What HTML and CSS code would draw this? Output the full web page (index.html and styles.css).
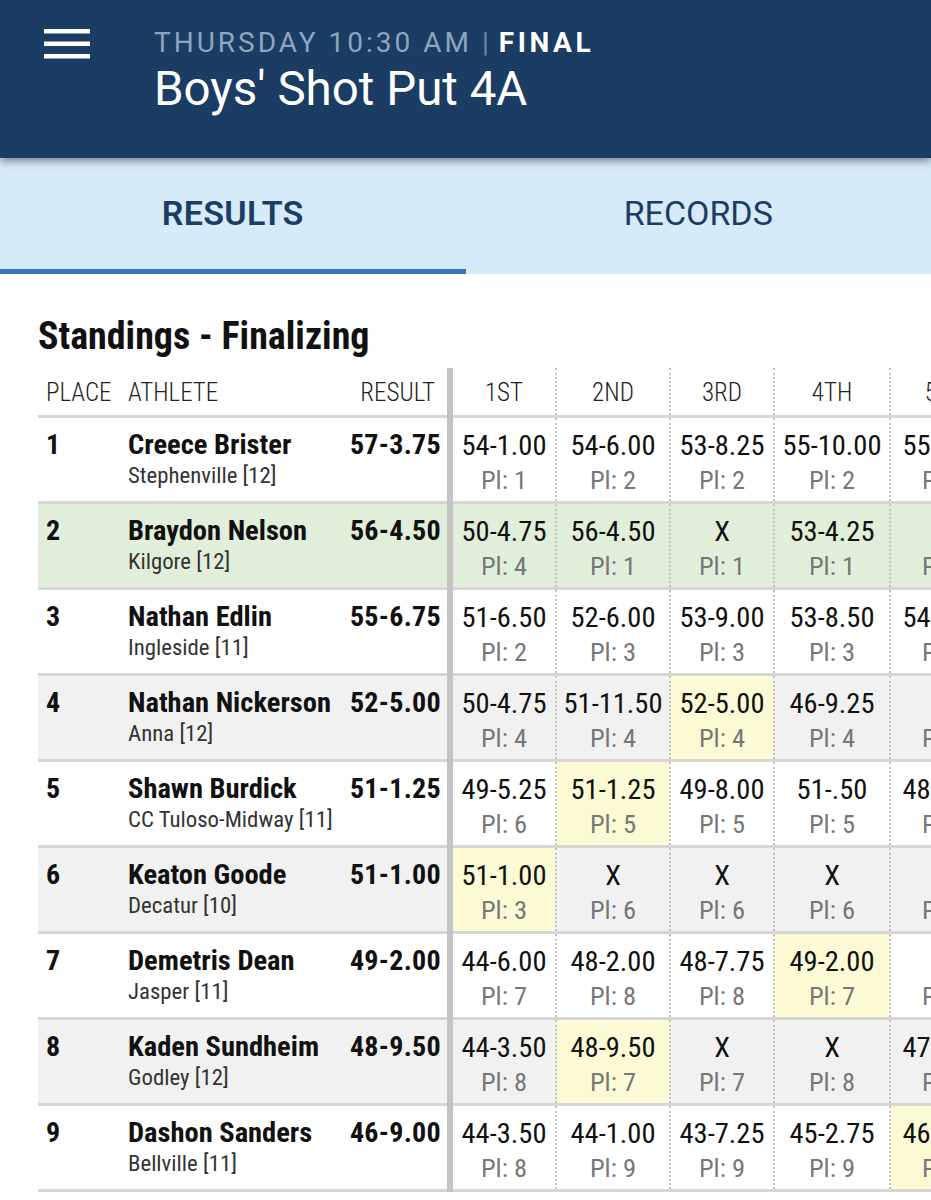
FILE: index.html
```html
<!DOCTYPE html>
<html lang="en">
<head>
<meta charset="utf-8">
<title>Boys' Shot Put 4A</title>
<link rel="stylesheet" href="styles.css">
</head>
<body>
<header class="appbar">
  <button class="menu" aria-label="Menu">
    <svg width="46" height="30" viewBox="0 0 46 30"><rect x="0" y="0" width="46" height="4.5" fill="#fff"/><rect x="0" y="12.5" width="46" height="4.5" fill="#fff"/><rect x="0" y="25" width="46" height="4.5" fill="#fff"/></svg>
  </button>
  <div class="titles">
    <div class="meta">THURSDAY 10:30 AM <span class="sep">|</span> <b>FINAL</b></div>
    <h1 class="title">Boys' Shot Put 4A</h1>
  </div>
</header>
<nav class="tabs">
  <div class="tab active">RESULTS</div>
  <div class="tab">RECORDS</div>
</nav>
<main class="content">
  <h2 class="heading">Standings - Finalizing</h2>
  <div class="tablewrap">
    <table class="standings">
      <colgroup>
        <col class="c-place"><col class="c-athlete"><col class="c-result">
        <col class="c-a1"><col class="c-a2"><col class="c-a3"><col class="c-a4"><col class="c-a5"><col class="c-a6">
      </colgroup>
      <thead>
        <tr>
          <th class="place">PLACE</th><th class="athlete">ATHLETE</th><th class="result">RESULT</th>
          <th class="att">1ST</th><th class="att">2ND</th><th class="att">3RD</th><th class="att">4TH</th><th class="att">5TH</th><th class="att">6TH</th>
        </tr>
      </thead>
      <tbody>
        <tr>
          <td class="place">1</td><td class="athlete"><div class="name">Creece Brister</div><div class="school">Stephenville [12]</div></td><td class="result">57-3.75</td>
          <td class="att"><div class="mark">54-1.00</div><div class="pl">Pl: 1</div></td>
          <td class="att"><div class="mark">54-6.00</div><div class="pl">Pl: 2</div></td>
          <td class="att"><div class="mark">53-8.25</div><div class="pl">Pl: 2</div></td>
          <td class="att"><div class="mark">55-10.00</div><div class="pl">Pl: 2</div></td>
          <td class="att"><div class="mark">55-2.50</div><div class="pl">Pl: 2</div></td>
          <td class="att best"><div class="mark">57-3.75</div><div class="pl">Pl: 1</div></td>
        </tr>
        <tr class="mine">
          <td class="place">2</td><td class="athlete"><div class="name">Braydon Nelson</div><div class="school">Kilgore [12]</div></td><td class="result">56-4.50</td>
          <td class="att"><div class="mark">50-4.75</div><div class="pl">Pl: 4</div></td>
          <td class="att"><div class="mark">56-4.50</div><div class="pl">Pl: 1</div></td>
          <td class="att"><div class="mark">X</div><div class="pl">Pl: 1</div></td>
          <td class="att"><div class="mark">53-4.25</div><div class="pl">Pl: 1</div></td>
          <td class="att"><div class="mark">X</div><div class="pl">Pl: 1</div></td>
          <td class="att"><div class="mark">X</div><div class="pl">Pl: 2</div></td>
        </tr>
        <tr>
          <td class="place">3</td><td class="athlete"><div class="name">Nathan Edlin</div><div class="school">Ingleside [11]</div></td><td class="result">55-6.75</td>
          <td class="att"><div class="mark">51-6.50</div><div class="pl">Pl: 2</div></td>
          <td class="att"><div class="mark">52-6.00</div><div class="pl">Pl: 3</div></td>
          <td class="att"><div class="mark">53-9.00</div><div class="pl">Pl: 3</div></td>
          <td class="att"><div class="mark">53-8.50</div><div class="pl">Pl: 3</div></td>
          <td class="att"><div class="mark">54-3.25</div><div class="pl">Pl: 3</div></td>
          <td class="att best"><div class="mark">55-6.75</div><div class="pl">Pl: 3</div></td>
        </tr>
        <tr>
          <td class="place">4</td><td class="athlete"><div class="name">Nathan Nickerson</div><div class="school">Anna [12]</div></td><td class="result">52-5.00</td>
          <td class="att"><div class="mark">50-4.75</div><div class="pl">Pl: 4</div></td>
          <td class="att"><div class="mark">51-11.50</div><div class="pl">Pl: 4</div></td>
          <td class="att best"><div class="mark">52-5.00</div><div class="pl">Pl: 4</div></td>
          <td class="att"><div class="mark">46-9.25</div><div class="pl">Pl: 4</div></td>
          <td class="att"><div class="mark">X</div><div class="pl">Pl: 4</div></td>
          <td class="att"><div class="mark">X</div><div class="pl">Pl: 4</div></td>
        </tr>
        <tr>
          <td class="place">5</td><td class="athlete"><div class="name">Shawn Burdick</div><div class="school">CC Tuloso-Midway [11]</div></td><td class="result">51-1.25</td>
          <td class="att"><div class="mark">49-5.25</div><div class="pl">Pl: 6</div></td>
          <td class="att best"><div class="mark">51-1.25</div><div class="pl">Pl: 5</div></td>
          <td class="att"><div class="mark">49-8.00</div><div class="pl">Pl: 5</div></td>
          <td class="att"><div class="mark">51-.50</div><div class="pl">Pl: 5</div></td>
          <td class="att"><div class="mark">48-6.00</div><div class="pl">Pl: 5</div></td>
          <td class="att"><div class="mark">X</div><div class="pl">Pl: 5</div></td>
        </tr>
        <tr>
          <td class="place">6</td><td class="athlete"><div class="name">Keaton Goode</div><div class="school">Decatur [10]</div></td><td class="result">51-1.00</td>
          <td class="att best"><div class="mark">51-1.00</div><div class="pl">Pl: 3</div></td>
          <td class="att"><div class="mark">X</div><div class="pl">Pl: 6</div></td>
          <td class="att"><div class="mark">X</div><div class="pl">Pl: 6</div></td>
          <td class="att"><div class="mark">X</div><div class="pl">Pl: 6</div></td>
          <td class="att"><div class="mark">X</div><div class="pl">Pl: 6</div></td>
          <td class="att"><div class="mark">X</div><div class="pl">Pl: 6</div></td>
        </tr>
        <tr>
          <td class="place">7</td><td class="athlete"><div class="name">Demetris Dean</div><div class="school">Jasper [11]</div></td><td class="result">49-2.00</td>
          <td class="att"><div class="mark">44-6.00</div><div class="pl">Pl: 7</div></td>
          <td class="att"><div class="mark">48-2.00</div><div class="pl">Pl: 8</div></td>
          <td class="att"><div class="mark">48-7.75</div><div class="pl">Pl: 8</div></td>
          <td class="att best"><div class="mark">49-2.00</div><div class="pl">Pl: 7</div></td>
          <td class="att"><div class="mark">X</div><div class="pl">Pl: 7</div></td>
          <td class="att"><div class="mark">X</div><div class="pl">Pl: 7</div></td>
        </tr>
        <tr>
          <td class="place">8</td><td class="athlete"><div class="name">Kaden Sundheim</div><div class="school">Godley [12]</div></td><td class="result">48-9.50</td>
          <td class="att"><div class="mark">44-3.50</div><div class="pl">Pl: 8</div></td>
          <td class="att best"><div class="mark">48-9.50</div><div class="pl">Pl: 7</div></td>
          <td class="att"><div class="mark">X</div><div class="pl">Pl: 7</div></td>
          <td class="att"><div class="mark">X</div><div class="pl">Pl: 8</div></td>
          <td class="att"><div class="mark">47-1.00</div><div class="pl">Pl: 8</div></td>
          <td class="att"><div class="mark">X</div><div class="pl">Pl: 8</div></td>
        </tr>
        <tr>
          <td class="place">9</td><td class="athlete"><div class="name">Dashon Sanders</div><div class="school">Bellville [11]</div></td><td class="result">46-9.00</td>
          <td class="att"><div class="mark">44-3.50</div><div class="pl">Pl: 8</div></td>
          <td class="att"><div class="mark">44-1.00</div><div class="pl">Pl: 9</div></td>
          <td class="att"><div class="mark">43-7.25</div><div class="pl">Pl: 9</div></td>
          <td class="att"><div class="mark">45-2.75</div><div class="pl">Pl: 9</div></td>
          <td class="att best"><div class="mark">46-9.00</div><div class="pl">Pl: 9</div></td>
          <td class="att"><div class="mark">X</div><div class="pl">Pl: 9</div></td>
        </tr>
      </tbody>
    </table>
  </div>
</main>
</body>
</html>
```
FILE: styles.css
```css
* { box-sizing: border-box; }
html, body { margin: 0; padding: 0; background: #fff; }
body {
  font-family: "Roboto Condensed", Roboto, "Liberation Sans", sans-serif;
  font-stretch: 75%;
  color: #111;
  overflow-x: hidden;
}
.appbar {
  position: relative;
  z-index: 2;
  height: 158px;
  background: #1b3c63;
  display: flex;
  align-items: flex-start;
  box-shadow: 0 3px 8px rgba(0,0,0,0.45);
}
.menu {
  margin: 29px 0 0 44px;
  padding: 0;
  border: 0;
  background: none;
  width: 46px;
  height: 30px;
  display: flex;
}
.titles { margin-left: 64px; padding-top: 27px; }
.meta {
  font-family: Roboto, sans-serif;
  font-stretch: 100%;
  font-size: 28px;
  line-height: 32px;
  letter-spacing: 3px;
  color: #8ea5bf;
}
.meta .sep { color: #6f88a5; letter-spacing: 0; }
.meta b { color: #fff; font-weight: 700; letter-spacing: 3.6px; }
.title {
  margin: 2px 0 0;
  font-family: Roboto, sans-serif;
  font-stretch: 100%;
  font-weight: 400;
  font-size: 47.5px;
  line-height: 56px;
  color: #fff;
}
.tabs {
  display: flex;
  background: #d6eaf8;
  height: 116px;
}
.tab {
  flex: 1;
  display: flex;
  justify-content: center;
  padding-top: 35px;
  font-stretch: 100%;
  font-family: Roboto, sans-serif;
  font-size: 34px;
  line-height: 40px;
  color: #1b3c63;
  font-weight: 400;
  border-bottom: 5px solid transparent;
}
.tab.active {
  font-weight: 600;
  letter-spacing: 0.3px;
  border-bottom-color: #3975c0;
}
.content { padding: 0 0 0 38px; }
.heading {
  margin: 40px 0 0;
  font-size: 38px;
  line-height: 44px;
  font-weight: 700;
  color: #111;
}
.tablewrap { overflow: hidden; margin-top: 10px; }
.standings {
  border-collapse: collapse;
  table-layout: fixed;
  width: 1010px;
}
.c-place { width: 82px; }
.c-athlete { width: 220px; }
.c-result { width: 110px; }
.c-a1 { width: 106px; }
.c-a2 { width: 114px; }
.c-a3 { width: 104px; }
.c-a4 { width: 116px; }
.c-a5 { width: 110px; }
.c-a6 { width: 110px; }
.standings th {
  font-weight: 300;
  font-size: 25px;
  line-height: 30px;
  color: #222;
  height: 48px;
  padding: 10px 8px 0;
  vertical-align: top;
  border-bottom: 3px solid #d6d6d6;
  white-space: nowrap;
}
.standings th.place, .standings th.athlete { text-align: left; }
.standings th.result, .standings td.result { text-align: right; border-right: 6px solid #c4c4c4; }
.standings th.att { text-align: center; border-left: 2px dotted #c4c4c4; }
.standings th.result { padding-right: 12px; }
.standings td {
  vertical-align: top;
  height: 86px;
  padding: 10px 8px 0;
  border-bottom: 3px solid #d6d6d6;
  white-space: nowrap;
}
.standings td.place { font-weight: 700; font-size: 28px; line-height: 34px; }
.standings td.result { font-weight: 700; font-size: 28px; line-height: 34px; padding-right: 6px; letter-spacing: 0.3px; }
.standings th.athlete, .standings td.athlete { padding-left: 8px; }
.name { font-weight: 700; font-size: 28.5px; line-height: 34px; }
.school { font-size: 22.8px; line-height: 28px; color: #333; }
.standings td.att {
  text-align: center;
  border-left: 2px dotted #c4c4c4;
  padding: 11px 2px 0;
}
.mark { font-size: 28.5px; line-height: 34px; color: #111; }
.pl { font-size: 26.5px; line-height: 34px; color: #777; }
.standings tbody tr:nth-child(even) td { background: #f1f1f1; }
.standings tbody tr.mine td { background: #e1eed9; }
.standings tbody tr td.best { background: #fcfad4; }
.standings tbody tr.mine td.best { background: #e1eed9; }
```
